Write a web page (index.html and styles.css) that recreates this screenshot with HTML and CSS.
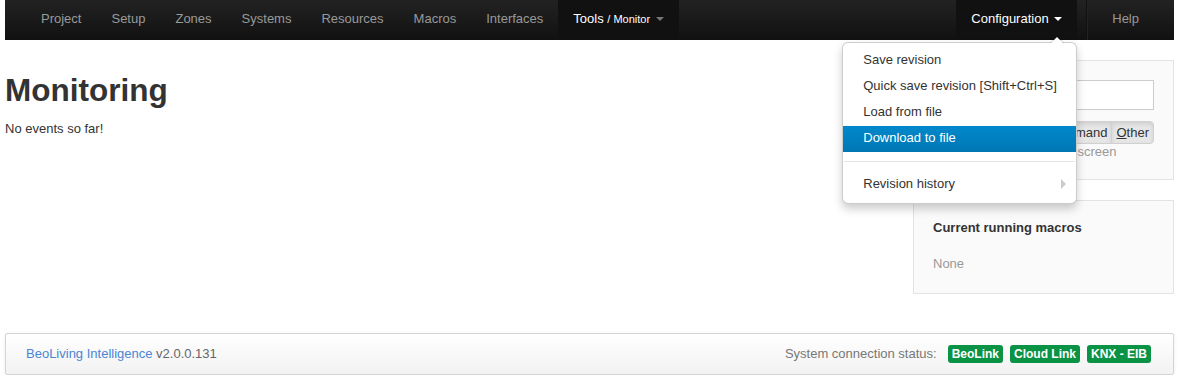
FILE: index.html
```html
<!DOCTYPE html>
<html lang="en">
<head>
    <meta charset="UTF-8">
    <title>Monitoring</title>
    <link rel="stylesheet" href="styles.css">
</head>
<body>
    <!-- top bar -->
    <div class="navbar">
        <ul class="nav">
            <li><a href="#">Project</a></li>
            <li><a href="#">Setup</a></li>
            <li><a href="#">Zones</a></li>
            <li><a href="#">Systems</a></li>
            <li><a href="#">Resources</a></li>
            <li><a href="#">Macros</a></li>
            <li><a href="#">Interfaces</a></li>
            <li class="active"><a href="#">Tools <small>/ Monitor</small> <b class="caret"></b></a></li>
        </ul>
        <ul class="nav nav-right">
            <li class="active open">
                <a href="#">Configuration <b class="caret"></b></a>
                <ul class="dropdown-menu">
                    <li><a href="#">Save revision</a></li>
                    <li><a href="#">Quick save revision [Shift+Ctrl+S]</a></li>
                    <li><a href="#">Load from file</a></li>
                    <li class="hover"><a href="#">Download to file</a></li>
                    <li class="divider"></li>
                    <li class="submenu"><a href="#">Revision history</a></li>
                </ul>
            </li>
            <li class="divider-vertical"></li>
            <li><a href="#">Help</a></li>
        </ul>
    </div>

    <div class="page">
        <div class="content">
            <h1>Monitoring</h1>
            <p>No events so far!</p>
        </div>

        <div class="sidebar">
            <div class="well">
                <input type="text" class="filter-input">
                <div class="btn-group">
                    <button class="btn">Event</button>
                    <button class="btn">Command</button>
                    <button class="btn"><u>O</u>ther</button>
                </div>
                <div class="help">Filters only apply to your screen</div>
            </div>
            <div class="well well-macros">
                <div class="well-title">Current running macros</div>
                <div class="muted">None</div>
            </div>
        </div>
    </div>

    <div class="footer">
        <div><a href="#">BeoLiving Intelligence</a> v2.0.0.131</div>
        <div class="status">
            <span>System connection status:</span>
            <span class="label">BeoLink</span>
            <span class="label">Cloud Link</span>
            <span class="label">KNX - EIB</span>
        </div>
    </div>
</body>
</html>
```

FILE: styles.css
```css
/* base */
body {
    margin: 0;
    padding: 0 5px;
    font-family: "Liberation Sans", Arial, sans-serif;
    font-size: 13px;
    line-height: 20px;
    color: #333;
    background: #fff;
}

a {
    color: #4a86d4;
    text-decoration: none;
}

/* top bar */
.navbar {
    display: flex;
    justify-content: space-between;
    height: 40px;
    padding: 0 20px 0 21px;
    background: linear-gradient(#222, #111);
}

.nav {
    display: flex;
    margin: 0;
    padding: 0;
    list-style: none;
}

.nav > li {
    position: relative;
}

.nav > li > a {
    display: block;
    height: 20px;
    padding: 9px 15px 11px;
    color: #999;
}

.nav > li.active > a {
    background: #111;
    color: #fff;
}

.nav small {
    font-size: 11px;
}

.caret {
    display: inline-block;
    width: 0;
    height: 0;
    margin-left: 2px;
    margin-top: 8px;
    vertical-align: top;
    border-top: 4px solid #777;
    border-left: 4px solid transparent;
    border-right: 4px solid transparent;
}

.open .caret {
    border-top-color: #fff;
}

.divider-vertical {
    width: 1px;
    height: 40px;
    margin: 0 9px;
    background: #111;
    border-right: 1px solid #222;
}

/* dropdown */
.dropdown-menu {
    position: absolute;
    top: 100%;
    right: 0;
    z-index: 10;
    width: 233px;
    margin: 2px 0 0;
    padding: 5px 0;
    list-style: none;
    background: #fff;
    border: 1px solid rgba(0,0,0,0.2);
    border-radius: 6px;
    box-shadow: 0 5px 10px rgba(0,0,0,0.2);
}

.dropdown-menu:before {
    content: "";
    position: absolute;
    top: -7px;
    right: 12px;
    border-left: 7px solid transparent;
    border-right: 7px solid transparent;
    border-bottom: 7px solid rgba(0,0,0,0.2);
}

.dropdown-menu:after {
    content: "";
    position: absolute;
    top: -6px;
    right: 13px;
    border-left: 6px solid transparent;
    border-right: 6px solid transparent;
    border-bottom: 6px solid #fff;
}

.dropdown-menu li > a {
    display: block;
    padding: 2px 20px 4px;
    color: #333;
    white-space: nowrap;
}

.dropdown-menu li.hover > a {
    color: #fff;
    background: linear-gradient(#0088cc, #0077b3);
}

.dropdown-menu .divider {
    height: 1px;
    margin: 9px 1px;
    background: #e5e5e5;
    border-bottom: 1px solid #fff;
}

.submenu > a {
    display: flex !important;
    justify-content: space-between;
    align-items: center;
}

.submenu > a:after {
    content: "";
    margin-right: -10px;
    border-top: 5px solid transparent;
    border-bottom: 5px solid transparent;
    border-left: 5px solid #ccc;
}

/* page */
.page {
    display: flex;
    justify-content: space-between;
    padding-top: 20px;
}

h1 {
    margin: 10px 0 9px;
    font-size: 31.5px;
    line-height: 40px;
    font-weight: bold;
    color: #333;
}

p {
    margin: 0;
}

.sidebar {
    width: 261px;
}

.well {
    padding: 19px;
    margin-bottom: 20px;
    background: #fafafa;
    border: 1px solid #e3e3e3;
}

.well-macros {
    padding-top: 17px;
}

.filter-input {
    display: block;
    box-sizing: border-box;
    width: 100%;
    height: 30px;
    margin: 0 0 11px;
    border: 1px solid #ccc;
    background: #fff;
}

.btn-group {
    display: flex;
    justify-content: flex-end;
}

.btn {
    font-family: inherit;
    font-size: 13px;
    line-height: 17px;
    padding: 2px 4px;
    color: #333;
    background: #e6e6e6;
    border: 1px solid #d0d0d0;
    box-shadow: inset 0 2px 4px rgba(0,0,0,0.1);
    margin-left: -1px;
}

.btn:first-child {
    border-radius: 4px 0 0 4px;
}

.btn:last-child {
    border-radius: 0 4px 4px 0;
}

.help {
    color: #999;
    line-height: 16px;
}

.well-title {
    font-weight: bold;
    margin-bottom: 16px;
}

.muted {
    color: #999;
}

/* footer */
.footer {
    display: flex;
    justify-content: space-between;
    align-items: center;
    height: 40px;
    margin-top: 19px;
    padding: 0 22px 0 20px;
    color: #666;
    background: linear-gradient(#fff, #f2f2f2);
    border: 1px solid #d4d4d4;
    border-radius: 2px;
    box-shadow: 0 1px 4px rgba(0,0,0,0.065);
}

.status {
    display: flex;
    align-items: center;
    gap: 7px;
    color: #777;
}

.status span:first-child {
    margin-right: 4px;
}

.label {
    padding: 2px 4px;
    font-size: 12px;
    font-weight: bold;
    line-height: 14px;
    color: #fff;
    background: #0a9245;
    border-radius: 3px;
}
```
